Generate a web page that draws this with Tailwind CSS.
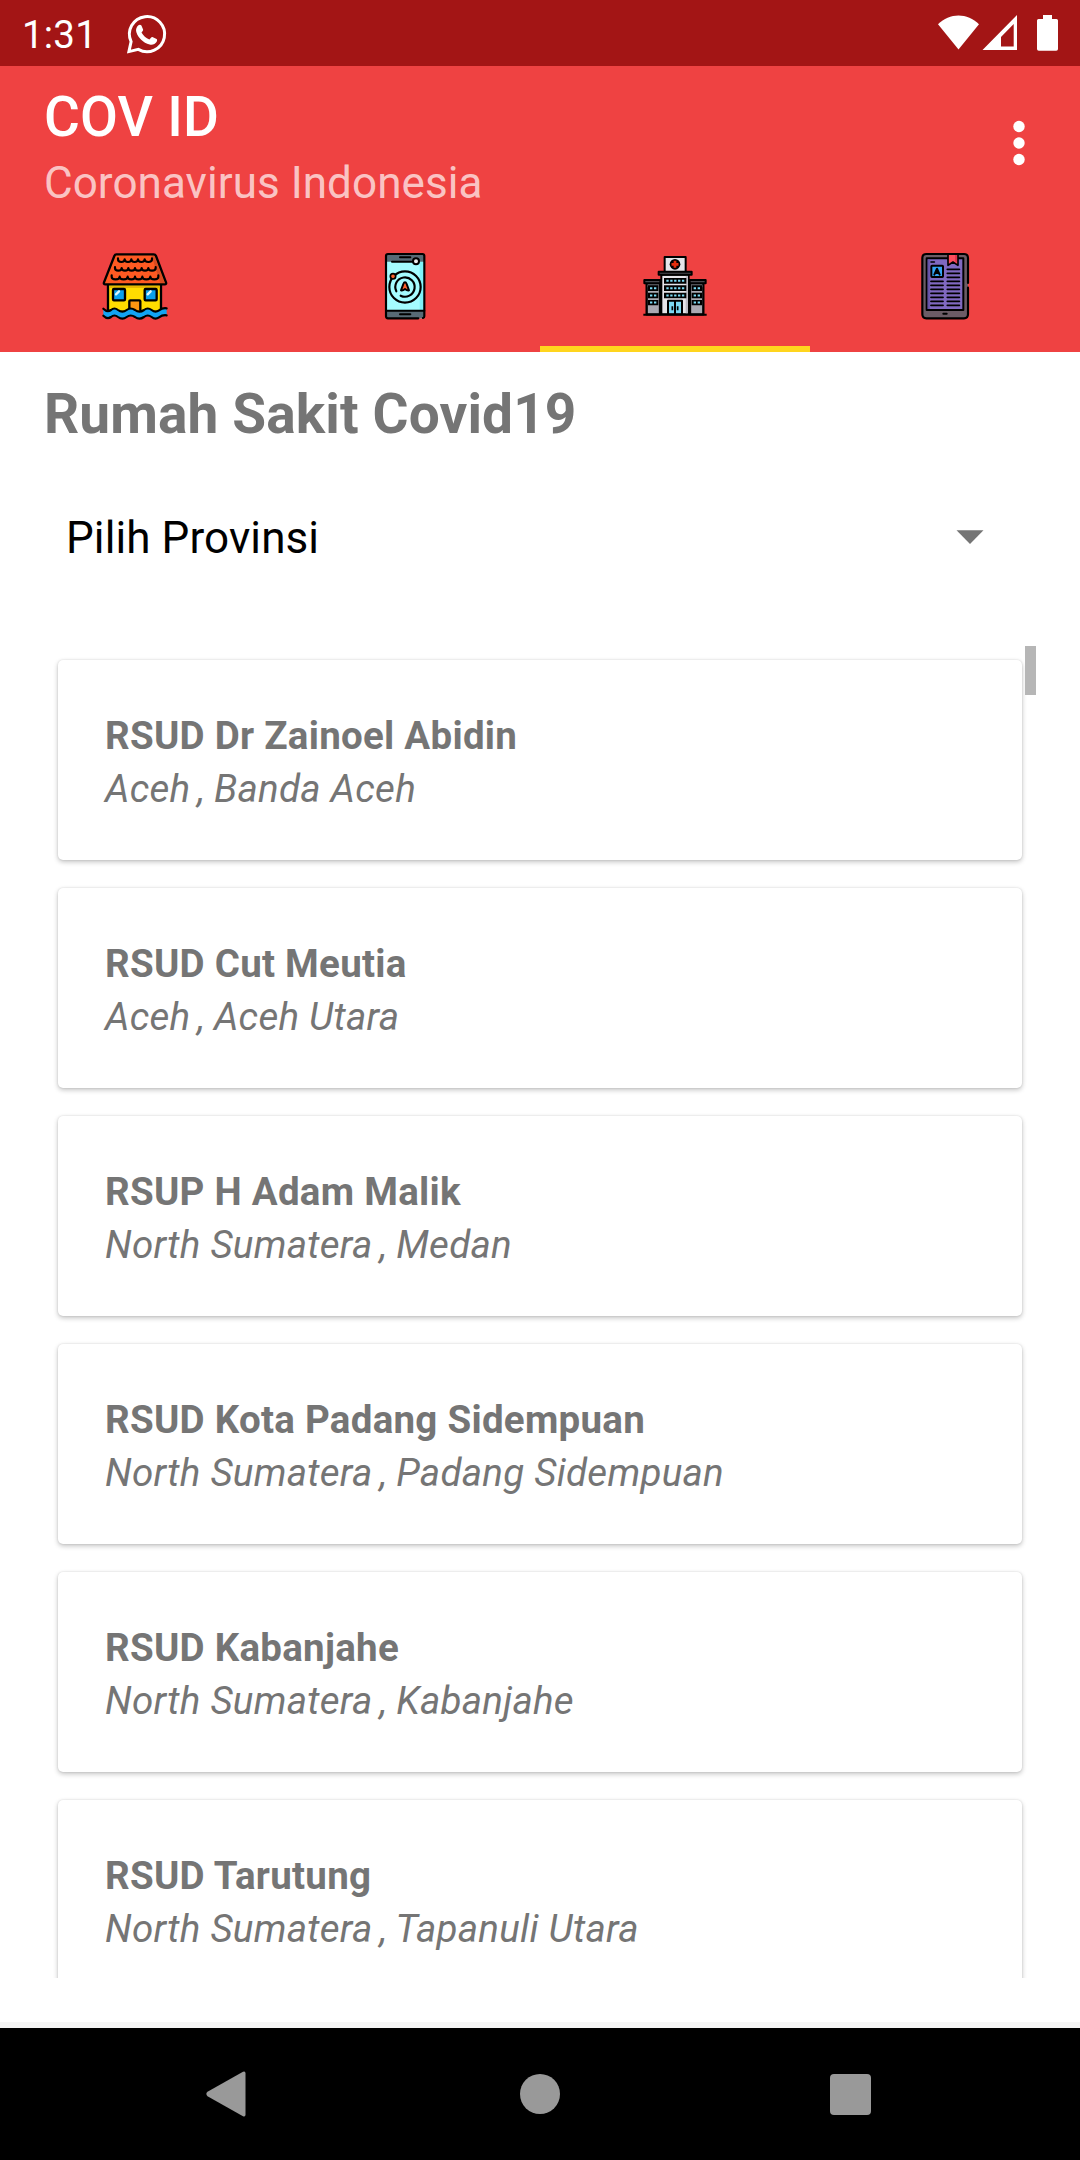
<!DOCTYPE html>
<html lang="id">
<head>
<meta charset="utf-8">
<title>COV ID</title>
<script src="https://cdn.jsdelivr.net/npm/@tailwindcss/browser@4"></script>
</head>
<body class="bg-white">
<div class="flex h-[2160px] w-[1080px] flex-col overflow-hidden bg-white font-[Roboto,sans-serif]">
  <!-- Status bar -->
  <div class="flex h-[66px] shrink-0 items-start justify-between bg-[#a31515] text-white">
    <div class="flex items-start pl-[22px]">
      <span class="w-[102px] pt-3 text-[38.5px] leading-[46px] tracking-[0.2px]">1:31</span>
      <svg class="mt-[11px] h-[45px] w-[45px]" viewBox="0 0 45 45">
        <path d="M4.900 40.600l2.200-10A17.600 17.600 0 1 1 14.300 38.400Z" fill="none" stroke="#fff" stroke-width="3" stroke-linejoin="miter"/>
        <path d="M14.400 14.200c.8-.7 2.500-.7 3 .4l1.700 3.900c.3.800-.8 2.100-1.600 3 1.900 3.500 4.400 5.600 7.900 7 1-1 2.100-2.900 3-2.500l4.200 2c.9.600.5 2-.1 3.100-1.200 2.100-4.400 3.100-6.900 2.300C19.100 31.700 14.100 26.700 12.300 20.900c-.8-2.700.4-5.200 2.100-6.700Z" fill="#fff"/>
      </svg>
    </div>
    <svg class="mt-[11px] h-11 w-[145px]" viewBox="0 0 145 44">
      <path d="M3 13.300C14.500 1.700 32.500 1.700 44 13.300L23.500 38.500Z" fill="#fff"/>
      <path fill-rule="evenodd" d="M47.500 39L82 4V39ZM66 35.500H78.700V13L66 26Z" fill="#fff"/>
      <path d="M108 4h9v4h4.500a1.500 1.500 0 0 1 1.500 1.500V38a1.800 1.800 0 0 1-1.800 1.800h-17.400A1.800 1.800 0 0 1 102 38V9.500A1.500 1.500 0 0 1 103.500 8H108Z" fill="#fff"/>
    </svg>
  </div>

  <!-- App bar -->
  <header class="h-[286px] shrink-0 bg-[#ef4242]">
    <div class="flex h-[154px] justify-between pl-11">
      <div class="flex flex-col gap-2 pt-[19px]">
        <h1 class="text-[55px] leading-[64px] font-medium tracking-[0.2px] text-white">COV ID</h1>
        <p class="text-[44px] leading-[52px] tracking-[0.06px] text-white/70">Coronavirus Indonesia</p>
      </div>
      <svg class="mt-[54px] mr-[50px] h-[46px] w-[22px]" viewBox="0 0 22 46" fill="#fff">
        <circle cx="11" cy="6.500" r="5.700"/><circle cx="11" cy="23" r="5.700"/><circle cx="11" cy="39.500" r="5.700"/>
      </svg>
    </div>
    <nav class="grid h-[132px] grid-cols-4">
      <div class="flex justify-center pt-5">
        <svg class="h-[90px] w-[90px]" viewBox="0 0 270 270" stroke-linejoin="round" stroke-linecap="round">
          <rect x="54" y="130" width="159" height="86" fill="#ffdc00" stroke="#000" stroke-width="7"/>
          <path d="M58 137h151v7H58Z" fill="#e8b800"/>
          <path d="M79 43H191Q196 43 198 48L228 127Q230 133 224 133H46Q40 133 42 127L73 48Q75 43 79 43Z" fill="#ff5a22"/>
          <path d="M184 46h8l32 83h-13Z" fill="#d94c22"/>
          <path d="M79 43H191Q196 43 198 48L228 127Q230 133 224 133H46Q40 133 42 127L73 48Q75 43 79 43Z" fill="none" stroke="#000" stroke-width="7"/>
          <path d="M84 55v3q0 8 10 8t10-8q0 8 10 8t10-8q0 8 10 8t10-8q0 8 10 8t10-8q0 8 11 8t11-8v-3M75 81v3q0 8 10 8t10-8q0 8 10 8t10-8q0 8 10 8t10-8q0 8 10 8t10-8q0 8 10 8t10-8q0 8 11 8t11-8v-3M65 106v4q0 8 12 8t12-8q0 8 12 8t12-8q0 8 11 8t11-8q0 8 11 8t11-8q0 8 12 8t12-8q0 8 12 8t12-8v-4" fill="none" stroke="#000" stroke-width="6.500"/>
          <rect x="69" y="147" width="36" height="34" rx="3" fill="#0aa0ee" stroke="#000" stroke-width="7"/>
          <rect x="164" y="147" width="36" height="34" rx="3" fill="#0aa0ee" stroke="#000" stroke-width="7"/>
          <path d="M78 163l9-9M173 163l9-9" stroke="#d8f6ff" stroke-width="7"/>
          <path d="M118 210V184q0-3 3-3h27q3 0 3 3v26" fill="#ff9511" stroke="#000" stroke-width="7"/>
          <path d="M40 207q12 12 23 4 10-9 21 0 13 10 26 0 12-9 25 0 13 10 27 0 11-9 23 0 11 9 22 1 11-8 23-6v22q-12 0-23 6-11 6-22-1-12-8-23 0-14 9-27 0-13-8-25 0-13 9-26 0-11-8-21 0-12 7-23-4Z" fill="#12a4f4"/>
          <path d="M40 206q12 12 23 4 10-9 21 0 13 10 26 0 12-9 25 0 13 10 27 0 11-9 23 0 11 9 22 1 11-8 23-6M40 227q12 12 23 4 10-9 21 0 13 10 26 0 12-9 25 0 13 10 27 0 11-9 23 0 11 9 22 1 11-8 23-6" fill="none" stroke="#000" stroke-width="6.500"/>
        </svg>
      </div>
      <div class="flex justify-center pt-5">
        <svg class="h-[90px] w-[70px]" viewBox="0 0 210 270" stroke-linejoin="round" stroke-linecap="round">
          <rect x="48" y="42" width="115" height="193" rx="6" fill="#a5fcff"/>
          <path d="M149 65h12v145h-12Z" fill="#7ff1f8"/>
          <path d="M48 65V48q0-6 6-6h103q6 0 6 6v17ZM48 211v18q0 6 6 6h103q6 0 6-6v-18Z" fill="#586a75"/>
          <path d="M66 65H128M48 212H163" stroke="#000" stroke-width="6"/>
          <path d="M145 235H54q-6 0-6-6V48q0-6 6-6h103q6 0 6 6v181q0 4-4 5" fill="none" stroke="#000" stroke-width="6.500"/>
          <path d="M90 52h31M90 223h31" stroke="#000" stroke-width="6"/>
          <circle cx="138" cy="64" r="9" fill="#eee" stroke="#000" stroke-width="6"/>
          <circle cx="105" cy="141" r="47" fill="none" stroke="#000" stroke-width="6.500"/>
          <path d="M92 167A29 29 0 1 0 79 154" fill="none" stroke="#000" stroke-width="6.500"/>
          <circle cx="69" cy="109" r="8" fill="#ff622c" stroke="#000" stroke-width="5"/>
          <path d="M105 127q3 0 5 5l7 19q-5 2-12-4-7 6-12 4l7-19q2-5 5-5Z" fill="#ff622c" stroke="#000" stroke-width="6"/>
        </svg>
      </div>
      <div class="relative flex justify-center pt-5">
        <svg class="h-[90px] w-[80px]" viewBox="0 0 240 270" stroke-linejoin="round">
          <path d="M35 130h40v93H35ZM165 130h40v93h-40Z" fill="#aaa9b2" stroke="#000" stroke-width="7"/>
          <path d="M38 133h34v9H38ZM168 133h34v9h-34Z" fill="#74747c"/>
          <path d="M28 120h48v10H28ZM164 120h48v10h-48Z" fill="#4b4b50" stroke="#000" stroke-width="6"/>
          <path d="M79 104h82v119H79Z" fill="#e6e5ea" stroke="#000" stroke-width="6"/>
          <path d="M152 107h7v113h-7Z" fill="#bdbcc4"/>
          <rect x="89" y="51" width="63" height="45" fill="#e6e5ea" stroke="#000" stroke-width="6"/>
          <path d="M71 95h99v9H71Z" fill="#4b4b50" stroke="#000" stroke-width="6"/>
          <circle cx="120" cy="73" r="16" fill="#000"/>
          <path d="M116 62.500h8v6.500h6.500v8H124v6.500h-8V77h-6.500v-8h6.500Z" fill="#e62d0c"/>
          <path d="M87 114h67v17H87ZM87 136h67v17H87ZM87 158h67v17H87ZM39 136h31v17H39ZM39 158h31v17H39ZM39 180h31v16H39ZM170 136h31v17h-31ZM170 158h31v17h-31ZM170 180h31v16h-31Z" fill="#000"/>
          <path d="M94 122.500h54M94 144.500h54M94 166.500h54" stroke="#7bd9f3" stroke-width="6" stroke-dasharray="7 4.700"/>
          <path d="M45 144.500h19M45 166.500h19M45 187.500h19M176 144.500h19M176 166.500h19M176 187.500h19" stroke="#7bd9f3" stroke-width="6" stroke-dasharray="7 5"/>
          <path d="M99 223v-41h42v41ZM120 182v41" fill="#7bd9f3" stroke="#000" stroke-width="6"/>
          <path d="M112 199v12M128 199v12" stroke="#000" stroke-width="5"/>
          <path d="M25 224h190" stroke="#000" stroke-width="6"/>
        </svg>
        <div class="absolute inset-x-0 bottom-0 h-[6px] bg-[#ffd51e]"></div>
      </div>
      <div class="flex justify-center pt-5">
        <svg class="h-[90px] w-[70px]" viewBox="0 0 210 270" stroke-linejoin="round" stroke-linecap="round">
          <rect x="37" y="42" width="137" height="193" rx="12" fill="#6c5c66"/>
          <rect x="50" y="55" width="110" height="155" fill="#8069c0" stroke="#000" stroke-width="6"/>
          <path d="M53 58h6v149h-6Z" fill="#6552a5"/>
          <path d="M63 66h10" stroke="#000" stroke-width="5"/>
          <rect x="64" y="77" width="35" height="34" rx="2" fill="#34a4f4" stroke="#000" stroke-width="6"/>
          <path d="M73 104l8-18 8 18M76 99h10" fill="none" stroke="#000" stroke-width="6"/>
          <path d="M112 88h36M112 100h36M112 112h36M63 124h36M112 124h36M63 136h36M112 136h36M63 148h36M112 148h36M63 160h36M112 160h36M63 172h36M112 172h36M63 184h36M112 184h36M63 196h36M112 196h36" stroke="#000" stroke-width="5.500"/>
          <path d="M114 42h30v34l-15-10-15 10Z" fill="#ff4d5c" stroke="#000" stroke-width="5"/>
          <path d="M135 45h6v23l-6-4Z" fill="#e0354a"/>
          <path d="M174 129V54q0-12-12-12H49q-12 0-12 12v169q0 12 12 12h113q12 0 12-12v-80" fill="none" stroke="#000" stroke-width="6.500"/>
          <path d="M100 221h10" stroke="#000" stroke-width="6"/>
        </svg>
      </div>
    </nav>
  </header>

  <main class="flex h-[1670px] shrink-0 flex-col">
    <h2 class="mt-[30px] pl-11 text-[55px] leading-[64px] font-bold tracking-[0.12px] text-[#757575]">Rumah Sakit Covid19</h2>
    <div class="mt-[66px] flex h-[52px] justify-between pr-24 pl-[66px]">
      <span class="text-[44px] leading-[52px] tracking-[0.1px] text-black">Pilih Provinsi</span>
      <svg class="mt-[18px] h-[14px] w-[28px]" viewBox="0 0 28 14"><path d="M.500 .300h27L14 13.900Z" fill="#757575"/></svg>
    </div>
    <div class="relative mt-[82px] h-[1332px] overflow-hidden px-[58px] pt-[14px]">
      <div id="list" class="flex flex-col gap-7"></div>
      <div class="absolute top-0 left-[1025px] h-[49px] w-[11px] bg-[#b6b6b6]"></div>
    </div>
  </main>
  <div class="h-[6px] shrink-0 bg-[#f5f5f5]"></div>

  <!-- Navigation bar -->
  <footer class="flex h-[132px] shrink-0 items-center bg-black pl-[206px]">
    <svg class="h-[46px] w-10" viewBox="0 0 40 46"><path d="M37 .800Q39.500-.300 39.500 2.500V43.500Q39.500 46.300 37 45.200L1.500 25.200Q-.800 23 1.500 20.800Z" fill="#999"/></svg>
    <div class="ml-[274px] h-10 w-10 rounded-full bg-[#999]"></div>
    <div class="ml-[270px] h-[41px] w-[41px] rounded-[4px] bg-[#999]"></div>
  </footer>
</div>
<script>
  const hospitals = [
    ["RSUD Dr Zainoel Abidin", "Aceh", "Banda Aceh"],
    ["RSUD Cut Meutia", "Aceh", "Aceh Utara"],
    ["RSUP H Adam Malik", "North Sumatera", "Medan"],
    ["RSUD Kota Padang Sidempuan", "North Sumatera", "Padang Sidempuan"],
    ["RSUD Kabanjahe", "North Sumatera", "Kabanjahe"],
    ["RSUD Tarutung", "North Sumatera", "Tapanuli Utara"]
  ];
  document.getElementById("list").innerHTML = hospitals.map(([name, province, city]) => `
    <article class="h-[200px] shrink-0 rounded-[5px] bg-white pt-[49px] pl-[47px] text-[38.5px] leading-[53px] tracking-[0.27px] text-[#757575] shadow-[0_2px_5px_rgba(0,0,0,0.24),0_0_2px_rgba(0,0,0,0.12)]">
      <h3 class="font-bold">${name}</h3>
      <p class="italic">${province} <span class="-mr-px -ml-[2.5px]">,</span> ${city}</p>
    </article>`).join("");
</script>
</body>
</html>
